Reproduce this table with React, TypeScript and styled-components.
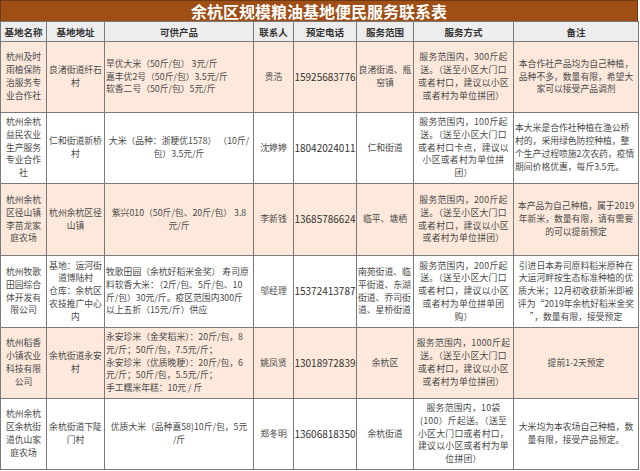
import styled, { createGlobalStyle } from 'styled-components'

const GlobalStyle = createGlobalStyle`
  body {
    margin: 0;
    padding: 0;
    background: #ffffff;
    font-family: 'Noto Sans CJK SC', 'Noto Sans', sans-serif;
  }
`

const Sheet = styled.div`
	width: 638px;
	display: flex;
	flex-direction: column;
`

const TitleBar = styled.div`
	height: 21px;
	background: #9f4e16;
	color: #ffffff;
	font-size: 16px;
	font-weight: 700;
	line-height: 21px;
	text-align: center;
	border: 1px solid #6d3a14;
	border-bottom: none;
	box-sizing: border-box;
`

const Table = styled.table`
	width: 638px;
	border-collapse: collapse;
	table-layout: fixed;
`

const HeadRow = styled.tr`
	height: 20px;
	background: #ededed;
`

const HeadCell = styled.th`
	border: 1px solid #7a7a7a;
	font-size: 9.5px;
	font-weight: 700;
	color: #333333;
	padding: 0;
	text-align: center;
	vertical-align: middle;
	line-height: 12px;
`

const Row = styled.tr<{ $tint: boolean; $h: number }>`
	height: ${p => p.$h}px;
	background: ${p => (p.$tint ? '#fce9db' : '#ffffff')};
`

const Cell = styled.td<{ $align?: 'left' | 'center'; $spread?: number }>`
	border: 1px solid #7a7a7a;
	padding: 0 1px;
	font-size: 8.8px;
	line-height: 12.8px;
	letter-spacing: ${p => p.$spread ?? 0}px;
	color: #4a4a4a;
	text-align: ${p => p.$align ?? 'center'};
	vertical-align: middle;
	white-space: pre;
	overflow: hidden;
`

const Phone = styled(Cell)`
	font-size: 10px;
	color: #333333;
	padding: 0;
`

const widths = [46, 58, 149, 40, 63, 57, 100, 125]
const heads = ['基地名称', '基地地址', '可供产品', '联系人', '预定电话', '服务范围', '服务方式', '备注']

type Farm = {
	name: string
	addr: string
	goods: string
	goodsLeft?: boolean
	person: string
	phone: string
	area: string
	areaLeft?: boolean
	way: string
	note: string
	noteLeft?: boolean
	h: number
}

const farms: Farm[] = [
	{
		name: '杭州及时\n雨植保防\n治服务专\n业合作社',
		addr: '良渚街道纤石\n村',
		goods: '旱优大米（50斤/包） 3元/斤\n嘉丰优2号（50斤/包）3.5元/斤\n软香二号（50斤/包）5元/斤',
		goodsLeft: true,
		person: '贵浩',
		phone: '15925683776',
		area: '良渚街道、瓶\n窑镇',
		way: '服务范围内，300斤起\n送。（送至小区大门口\n或者村口，建议以小区\n或者村为单位拼团）',
		note: '本合作社产品均为自己种植，\n品种不多，数量有限，希望大\n家可以接受产品调剂',
		h: 71,
	},
	{
		name: '杭州余杭\n益民农业\n生产服务\n专业合作\n社',
		addr: '仁和街道新桥\n村',
		goods: '大米（品种：浙粳优1578） （10斤/\n包）3.5元/斤',
		person: '沈婷婷',
		phone: '18042024011',
		area: '仁和街道',
		way: '服务范围内，100斤起\n送。（送至小区大门口\n或者村口卡点，建议以\n小区或者村为单位拼\n团）',
		note: '本大米是合作社种植在渔公桥\n村的，采用绿色防控种植，整\n个生产过程喷施2次农药，疫情\n期间价格优惠，每斤3.5元。',
		noteLeft: true,
		h: 71,
	},
	{
		name: '杭州余杭\n区径山镇\n李苗龙家\n庭农场',
		addr: '杭州余杭区径\n山镇',
		goods: '紫兴010（50斤/包、20斤/包） 3.8\n元/斤',
		person: '李新钱',
		phone: '13685786624',
		area: '临平、塘栖',
		way: '服务范围内，200斤起\n送。（送至小区大门口\n或者村口，建议以小区\n或者村为单位拼团）',
		note: '本产品为自己种植，属于2019\n年新米，数量有限，请有需要\n的可以提前预定',
		h: 72,
	},
	{
		name: '杭州牧歌\n田园综合\n体开发有\n限公司',
		addr: '基地：运河街\n道博陆村\n仓库：余杭区\n农技推广中心\n内',
		goods: '牧歌田园（余杭好稻米金奖） 寿司原\n料软香大米：（2斤/包、5斤/包、10\n斤/包）30元/斤。疫区范围内300斤\n以上五折（15元/斤）供应',
		goodsLeft: true,
		person: '邬经理',
		phone: '15372413787',
		area: '南苑街道、临\n平街道、东湖\n街道、乔司街\n道、星桥街道',
		areaLeft: true,
		way: '服务范围内，200斤起\n送。（送至小区大门口\n或者村口，建议以小区\n或者村为单位拼单团\n购）',
		note: '引进日本寿司原料稻米原种在\n大运河畔按生态标准种植的优\n质大米；12月初收获新米即被\n评为“2019年余杭好稻米金奖\n”，数量有限，接受预定',
		h: 72,
	},
	{
		name: '杭州稻香\n小镇农业\n科技有限\n公司',
		addr: '余杭街道永安\n村',
		goods: '永安珍米（金奖稻米）：20斤/包，8\n元/斤；50斤/包，7.5元/斤；\n永安珍米（优质晚粳）：20斤/包，6\n元/斤；50斤/包，5.5元/斤；\n手工糯米年糕：10元 / 斤',
		goodsLeft: true,
		person: '姚凤贤',
		phone: '13018972839',
		area: '余杭区',
		way: '服务范围内，1000斤起\n送。（送至小区大门口\n或者村口，建议以小区\n或者村为单位拼团）',
		note: '提前1-2天预定',
		h: 71,
	},
	{
		name: '杭州余杭\n区余杭街\n道仇山家\n庭农场',
		addr: '余杭街道下陡\n门村',
		goods: '优质大米（品种嘉58)10斤/包，5元\n/斤',
		person: '郑冬明',
		phone: '13606818350',
		area: '余杭街道',
		way: '服务范围内，10袋\n(100）斤起送。（送至\n小区大门口或者村口，\n建议以小区或者村为单\n位拼团）',
		note: '大米均为本农场自己种植，数\n量有限，接受产品预定。',
		h: 71,
	},
]

function App() {
	return (
		<>
			<GlobalStyle />
			<Sheet>
				<TitleBar>余杭区规模粮油基地便民服务联系表</TitleBar>
				<Table>
					<colgroup>
						{widths.map((w, i) => (
							<col key={i} style={{ width: w }} />
						))}
					</colgroup>
					<thead>
						<HeadRow>
							{heads.map(h => (
								<HeadCell key={h}>{h}</HeadCell>
							))}
						</HeadRow>
					</thead>
					<tbody>
						{farms.map((f, i) => (
							<Row key={f.phone} $tint={i % 2 === 0} $h={f.h}>
								<Cell>{f.name}</Cell>
								<Cell>{f.addr}</Cell>
								<Cell $align={f.goodsLeft ? 'left' : 'center'}>{f.goods}</Cell>
								<Cell>{f.person}</Cell>
								<Phone>{f.phone}</Phone>
								<Cell $align={f.areaLeft ? 'left' : 'center'}>{f.area}</Cell>
								<Cell $spread={0.3}>{f.way}</Cell>
								<Cell $align={f.noteLeft ? 'left' : 'center'}>{f.note}</Cell>
							</Row>
						))}
					</tbody>
				</Table>
			</Sheet>
		</>
	)
}

export default App
